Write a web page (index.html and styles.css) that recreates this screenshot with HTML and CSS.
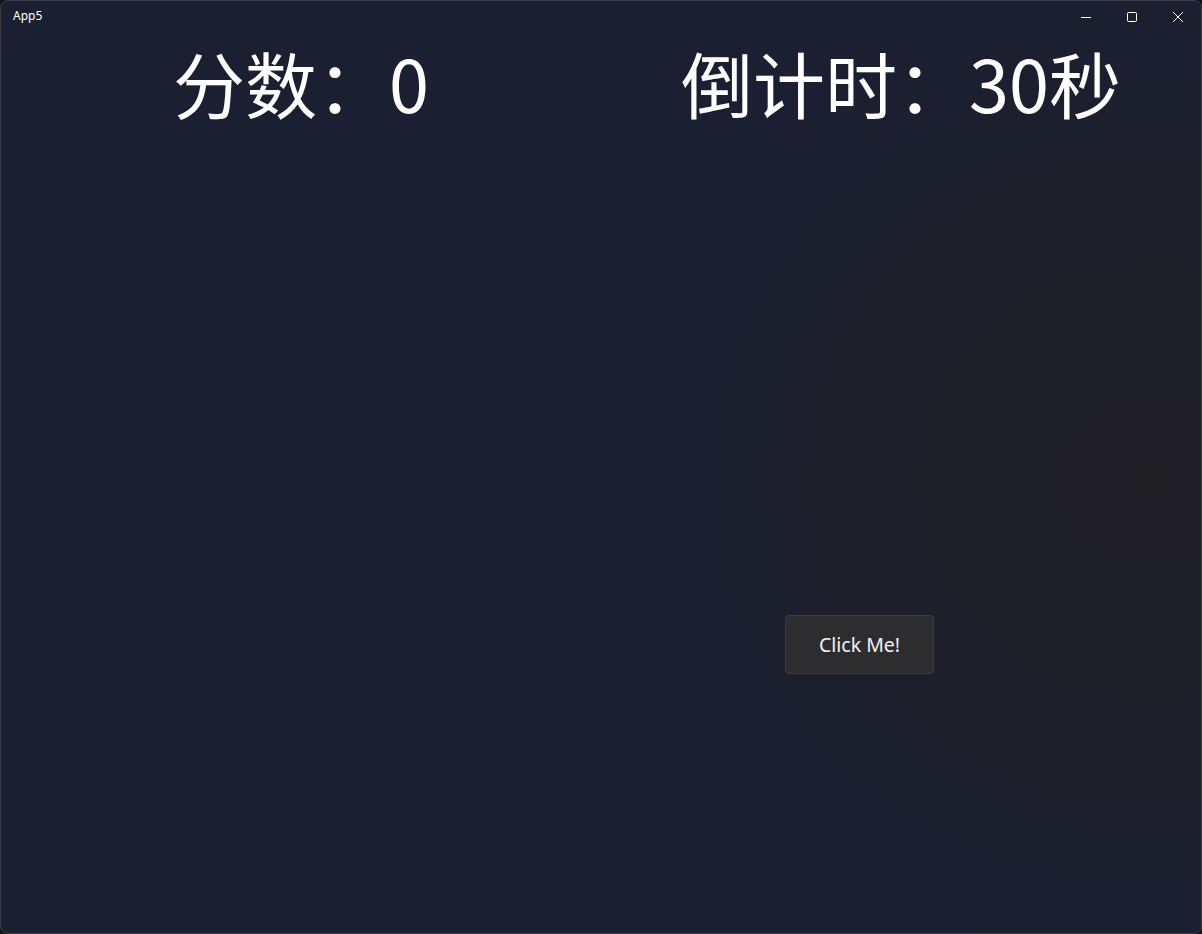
FILE: index.html
```html
<!DOCTYPE html>
<html lang="zh">
<head>
<meta charset="utf-8">
<title>App5</title>
<link rel="stylesheet" href="styles.css">
</head>
<body>
<div class="window">
  <header class="titlebar">
    <span class="app-title">App5</span>
    <div class="caption-buttons">
      <button class="cap-btn" aria-label="Minimize">
        <svg width="10" height="10" viewBox="0 0 10 10"><path d="M0 5.5H10" stroke="#fff" stroke-width="1"/></svg>
      </button>
      <button class="cap-btn" aria-label="Maximize">
        <svg width="10" height="10" viewBox="0 0 10 10"><rect x="0.5" y="0.5" width="9" height="9" rx="1" fill="none" stroke="#fff" stroke-width="1"/></svg>
      </button>
      <button class="cap-btn" aria-label="Close">
        <svg width="10" height="10" viewBox="0 0 10 10"><path d="M0 0L10 10M10 0L0 10" stroke="#fff" stroke-width="1"/></svg>
      </button>
    </div>
  </header>
  <main class="content">
    <div class="stats">
      <div class="stat">分数：0</div>
      <div class="stat">倒计时：30秒</div>
    </div>
    <div class="playfield">
      <button class="click-btn">Click Me!</button>
    </div>
  </main>
</div>
</body>
</html>
```
FILE: styles.css
```css
html, body {
  margin: 0;
  padding: 0;
  background: #111318;
  width: 1202px;
  height: 934px;
  overflow: hidden;
}
.window {
  box-sizing: border-box;
  width: 1202px;
  height: 934px;
  border: 1px solid #3b3d44;
  border-radius: 8px;
  overflow: hidden;
  display: flex;
  flex-direction: column;
  background:
    radial-gradient(ellipse 560px 520px at 1150px 480px, rgba(32,31,36,1) 0%, rgba(32,31,36,0.7) 40%, rgba(32,31,36,0) 100%),
    #1b1f32;
  font-family: "Noto Sans", "Noto Sans CJK SC", sans-serif;
  color: #fff;
}
.titlebar {
  height: 31px;
  display: flex;
  align-items: center;
  justify-content: space-between;
  flex: none;
}
.app-title {
  font-family: "Noto Sans", "Open Sans", sans-serif;
  font-size: 12px;
  padding-left: 12px;
  padding-bottom: 2px;
  color: #fff;
}
.caption-buttons {
  display: flex;
  height: 100%;
  align-self: flex-start;
}
.cap-btn {
  width: 46px;
  height: 31px;
  border: none;
  background: transparent;
  padding: 0;
  display: flex;
  align-items: center;
  justify-content: center;
}
.content {
  flex: 1;
  display: flex;
  flex-direction: column;
}
.stats {
  display: grid;
  grid-template-columns: 1fr 1fr;
}
.stat {
  text-align: center;
  font-family: "Noto Sans CJK SC", sans-serif;
  font-size: 72px;
  line-height: 72px;
  height: 72px;
  padding-top: 14px;
}
.playfield {
  flex: 1;
  position: relative;
}
.click-btn {
  position: absolute;
  left: 784px;
  top: 497px;
  width: 149px;
  height: 59px;
  box-sizing: border-box;
  background: #2d2d2f;
  border: 1px solid #3d3d40;
  border-radius: 4px;
  color: #f2f2f2;
  font-family: "Noto Sans", "Open Sans", sans-serif;
  font-size: 19.5px;
  padding: 0;
}
```
